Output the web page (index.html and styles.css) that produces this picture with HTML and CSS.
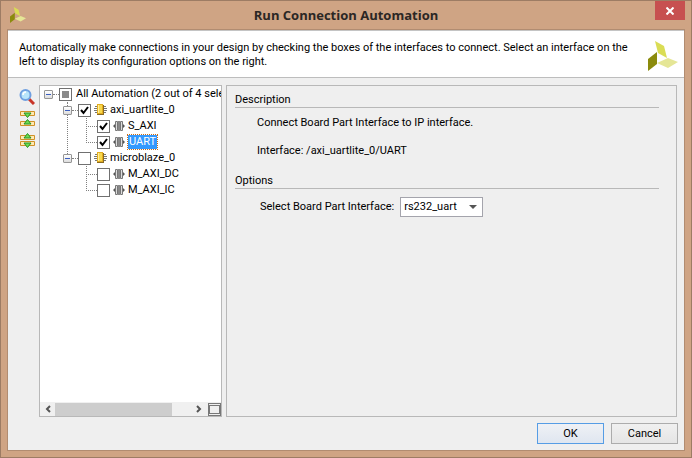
FILE: index.html
```html
<!DOCTYPE html>
<html lang="en">
<head>
<meta charset="utf-8">
<title>Run Connection Automation</title>
<link rel="stylesheet" href="styles.css">
</head>
<body>
<svg class="defs" aria-hidden="true">
  <symbol id="logo" viewBox="0 0 30 30">
    <path class="logo-top" d="M7 0l9 5 3 12-9-5z"/>
    <path class="logo-left" d="M0 18l9-7v12l-9 7z"/>
    <path class="logo-right" d="M9 22l11-5 10 4-10 6z"/>
  </symbol>
  <symbol id="chip" viewBox="0 0 13 12">
    <path d="M1 2.500h11M0 4.500h13M0 6.500h13M1 8.500h11" stroke="#777"/>
    <path d="M3 1h7v10H3z" fill="#8a6a20"/>
    <path d="M3 0h6v10H3z" fill="#e2ac20"/>
    <path d="M4 1h4v8H4z" fill="#f8d84c"/>
    <path d="M4.500 1v8" stroke="#fff0a0"/>
  </symbol>
  <symbol id="port" viewBox="0 0 12 12">
    <path d="M0 6l3-3v6zM12 6L9 3v6z" fill="#555"/>
    <path d="M2.500 1.500h2v9h-2zM7.500 1.500h2v9h-2z" fill="#ddd" stroke="#777"/>
    <path d="M5.500 1v10M6.500 1v10" stroke="#555" stroke-width=".7"/>
  </symbol>
</svg>
<div class="window">
  <header class="titlebar">
    <svg class="app-icon"><use href="#logo"/></svg>
    <h1>Run Connection Automation</h1>
    <button class="close" aria-label="Close"><svg viewBox="0 0 8 8"><path d="M.5 .5l7 7M7.500 .5l-7 7"/></svg></button>
  </header>
  <main class="client">
    <section class="banner">
      <p>Automatically make connections in your design by checking the boxes of the interfaces to connect. Select an interface on the left to display its configuration options on the right.</p>
      <svg class="brand"><use href="#logo"/></svg>
    </section>
    <div class="body">
      <nav class="tools" aria-label="Tree tools">
        <button aria-label="Search"><svg viewBox="0 0 16 16"><path d="M10 10l5 5" stroke="#c83428" stroke-width="3"/><circle cx="6.500" cy="6" r="5" fill="#b8e4fb" stroke="#6f9fe0" stroke-width="2"/><path d="M4 6q0-3 3-3" stroke="#fff" stroke-width="1.500" fill="none"/></svg></button>
        <button aria-label="Collapse all"><svg viewBox="0 0 16 16"><path d="M1.500 .5h14v4h-14zM1.500 10.500h14v4h-14z" fill="#ffe9b5" stroke="#cf9226"/><path d="M5 2h7L8.500 6.500zM5 13h7L8.500 8.500z" fill="#6ddb52" stroke="#259322"/></svg></button>
        <button aria-label="Expand all"><svg viewBox="0 0 16 16"><path d="M1.500 2.500h14v4h-14zM1.500 8.500h14v4h-14z" fill="#ffe9b5" stroke="#cf9226"/><path d="M5 5h7L8.500 .5zM5 10h7l-3.500 4.500z" fill="#6ddb52" stroke="#259322"/></svg></button>
      </nav>
      <section class="tree-panel">
        <ul class="tree">
          <li>
            <div class="row"><button class="toggle" aria-label="Collapse"></button><label><input type="checkbox" class="partial"><span>All Automation (2 out of 4 sele</span></label></div>
            <ul class="branch">
              <li>
                <div class="row"><button class="toggle" aria-label="Collapse"></button><label><input type="checkbox" checked><svg class="chip"><use href="#chip"/></svg><span>axi_uartlite_0</span></label></div>
                <ul class="leaves">
                  <li class="row"><label><input type="checkbox" checked><svg class="port"><use href="#port"/></svg><span>S_AXI</span></label></li>
                  <li class="row"><label><input type="checkbox" checked><svg class="port"><use href="#port"/></svg><span class="selected">UART</span></label></li>
                </ul>
              </li>
              <li>
                <div class="row"><button class="toggle" aria-label="Collapse"></button><label><input type="checkbox"><svg class="chip"><use href="#chip"/></svg><span>microblaze_0</span></label></div>
                <ul class="leaves">
                  <li class="row"><label><input type="checkbox"><svg class="port"><use href="#port"/></svg><span>M_AXI_DC</span></label></li>
                  <li class="row"><label><input type="checkbox"><svg class="port"><use href="#port"/></svg><span>M_AXI_IC</span></label></li>
                </ul>
              </li>
            </ul>
          </li>
        </ul>
        <div class="scrollbar">
          <button class="arrow" aria-label="Scroll left"><svg viewBox="0 0 6 8"><path d="M5 1L2 4l3 3"/></svg></button>
          <div class="track"><div class="thumb"></div></div>
          <button class="arrow" aria-label="Scroll right"><svg viewBox="0 0 6 8"><path d="M1 1l3 3-3 3"/></svg></button>
          <button class="corner" aria-label="Fit view"></button>
        </div>
      </section>
      <section class="details">
        <h2>Description</h2>
        <div class="description">
          <p>Connect Board Part Interface to IP interface.</p>
          <p>Interface: /axi_uartlite_0/UART</p>
        </div>
        <h2>Options</h2>
        <div class="option">
          <label for="board">Select Board Part Interface:</label>
          <div class="select"><select id="board"><option>rs232_uart</option></select></div>
        </div>
      </section>
    </div>
    <footer class="actions">
      <button class="primary">OK</button>
      <button>Cancel</button>
    </footer>
  </main>
</div>
</body>
</html>
```
FILE: styles.css
```css
* { box-sizing: border-box; }
body {
  margin: 0;
  color: #000;
  font: 11px/14px Roboto, sans-serif;
}
button, input, select { margin: 0; padding: 0; font: inherit; color: inherit; }
h1, h2, p, ul { margin: 0; padding: 0; }
ul { list-style: none; }
.defs { position: absolute; width: 0; height: 0; }
.window {
  display: flex;
  flex-direction: column;
  min-height: 100vh;
  padding: 0 6px 6px;
  background: #cfa484;
  border: 1px solid #9d7c64;
}
.titlebar {
  display: grid;
  grid-template-columns: 48px 1fr 48px;
  height: 28px;
}
.titlebar h1 {
  align-self: center;
  text-align: center;
  color: #2b2724;
  font: bold 13px/20px "Open Sans", sans-serif;
}
.app-icon { width: 16px; height: 16px; margin: 6px 3px; }
.close {
  justify-self: end;
  width: 30px;
  height: 19px;
  border: 0;
  background: #c75050;
}
.close svg { display: block; width: 8px; height: 8px; margin: auto; fill: none; stroke: #fff; stroke-width: 2; }
.client {
  display: flex;
  flex: 1;
  flex-direction: column;
  border: 1px solid #b18c71;
  background: #efefef;
}
.banner {
  display: flex;
  justify-content: space-between;
  min-height: 48px;
  padding: 10px 6px 0 11px;
  border-top: 1px solid #c4c4c4;
  border-bottom: 1px solid #bdbdbd;
  background: #fff;
}
.banner p { max-width: 610px; }
.brand { flex: none; width: 30px; height: 30px; }
.logo-top { fill: #dadd55; }
.logo-left { fill: #8b8b0c; }
.logo-right { fill: #e5e696; }
.app-icon .logo-top, .app-icon .logo-right { fill: #d3d63a; stroke: #8b8b0c; stroke-width: 1; }
.body { display: flex; flex: 1; padding: 7px 7px 0 11px; }
.tools { display: flex; flex: none; flex-direction: column; gap: 6px; width: 20px; padding-top: 4px; }
.tools button { width: 16px; height: 16px; border: 0; background: none; }
.tools svg { display: block; width: 16px; height: 16px; }
.tree-panel {
  display: flex;
  flex: none;
  flex-direction: column;
  justify-content: space-between;
  width: 183px;
  margin-right: 4px;
  overflow: hidden;
  border: 1px solid #b8b8b8;
  background: #fff;
}
.tree { padding-left: 4px; }
.row { display: flex; position: relative; align-items: center; height: 16px; white-space: nowrap; }
.row label { display: flex; align-items: center; }
.row span { margin-left: 2px; }
.row input {
  appearance: none;
  z-index: 1;
  width: 13px;
  height: 13px;
  margin-right: 2px;
  border: 1px solid #707070;
  background: #fff;
}
.row input:checked { background: #fff url("data:image/svg+xml,%3Csvg xmlns='http://www.w3.org/2000/svg' viewBox='0 0 11 11'%3E%3Cpath d='M2 5l2.500 3L9 2' fill='none' stroke='black' stroke-width='2'/%3E%3C/svg%3E"); }
.row input.partial { background: #8a8a8a; border-color: #707070; box-shadow: inset 0 0 0 2px #fff; }
.toggle {
  position: relative;
  z-index: 1;
  flex: none;
  width: 9px;
  height: 9px;
  border: 1px solid #969696;
  border-radius: 1px;
  background: linear-gradient(#3b5fc0, #3b5fc0) center / 5px 1px no-repeat, linear-gradient(#fff, #ddd);
}
.toggle + label { margin-left: 6px; }
.toggle::after { position: absolute; top: 3px; left: 8px; width: 6px; border-top: 1px dotted #808080; content: ""; }
.chip { width: 13px; height: 12px; margin: 0 1px; }
.port { width: 12px; height: 12px; margin: 0 1px; }
.branch { padding-left: 19px; }
.branch > li { position: relative; }
.branch > li:first-child::before { position: absolute; top: 0; bottom: -8px; left: 4px; border-left: 1px dotted #808080; content: ""; }
.leaves { padding-left: 34px; }
.leaves .row::before { position: absolute; top: -8px; left: -11px; width: 10px; height: 16px; border: 1px dotted #808080; border-width: 0 0 1px 1px; content: ""; }
.row .selected { padding: 0 1px; background: #3399ff; color: #fff; outline: 1px dotted #c86c18; }
.scrollbar { display: flex; align-items: center; height: 14px; background: #f0f0f0; }
.arrow { width: 15px; height: 13px; border: 0; background: none; }
.arrow svg { display: block; width: 6px; height: 8px; margin: auto; fill: none; stroke: #555; stroke-width: 2; }
.track { flex: 1; height: 13px; }
.thumb { width: 86%; height: 13px; background: #cdcdcd; }
.corner { width: 13px; height: 13px; margin-left: 2px; border: 1px solid #777; background: #efefef; }
.corner::before { display: block; width: 9px; height: 7px; margin: auto; border: 1px solid #777; content: ""; }
.details { flex: 1; padding: 7px 17px 7px 8px; border: 1px solid #b8b8b8; }
.details h2 { border-bottom: 1px solid #b8b8b8; font: inherit; }
.description { display: grid; gap: 14px; padding: 8px 22px 16px; }
.option { display: flex; align-items: center; gap: 6px; padding: 8px 25px; }
.select { position: relative; }
.select select { display: block; appearance: none; width: 83px; height: 20px; padding-left: 3px; border: 1px solid #a4a4ac; background: #fff; }
.select::after { position: absolute; top: 8px; right: 6px; border: 4px solid transparent; border-top-color: #555; content: ""; }
.actions { display: flex; justify-content: flex-end; gap: 7px; padding: 6px 6px; }
.actions button { width: 67px; height: 21px; border: 1px solid #acacac; background: linear-gradient(#f0f0f0, #e5e5e5); }
.actions .primary { border-color: #569de5; background: linear-gradient(#eff1f5, #dfe6f0); }
```
